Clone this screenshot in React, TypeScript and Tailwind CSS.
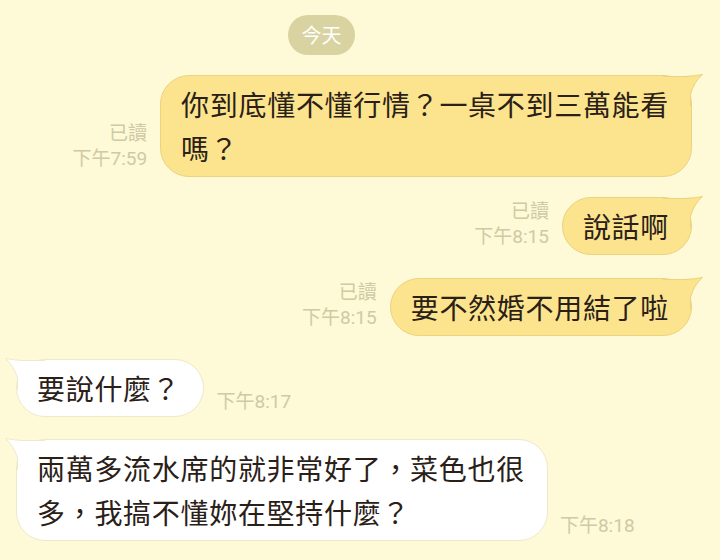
import React from "react";

function Tail({ side }: { side: "left" | "right" }) {
  const yellow = side === "right";
  const pos = yellow ? "right-[-12px]" : "left-[-12px] -scale-x-100";
  return (
    <svg className={`absolute top-[-4px] ${pos} w-[40px] h-[36px] pointer-events-none`} viewBox="0 0 40 36">
      <path d="M0 4 H22 Q32 3.5 39.5 2.5 Q31 10 28 22 V34 H0 Z" className={yellow ? "fill-[#fbe48d]" : "fill-white"} />
      <path
        d="M0 4.5 H22 Q32 4 39.5 2.5 Q31 10 27.5 22 V34"
        fill="none"
        strokeWidth="1"
        className={yellow ? "stroke-[#ecd37f]" : "stroke-[#eee9cb]"}
      />
    </svg>
  );
}

function Bubble({ side, children }: { side: "left" | "right"; children: React.ReactNode }) {
  const yellow = side === "right";
  return (
    <div
      className={`relative rounded-[29px] border ${
        yellow ? "bg-[#fbe48d] border-[#ecd37f]" : "bg-white border-[#eee9cb]"
      } pl-[20px] pr-[22px] py-[6px] text-[28px] leading-[44px] tracking-[0.7px] text-[#2a2017] font-['Noto_Sans_CJK_TC','Noto_Sans_CJK_SC',sans-serif]`}
    >
      <Tail side={side} />
      <span className="relative">{children}</span>
    </div>
  );
}

function ReadInfo({ time }: { time: string }) {
  return (
    <div className="flex flex-col items-end text-[19px] leading-[25px] text-[#cfcaa5] mb-[6px] font-[Roboto,'Noto_Sans_CJK_TC',sans-serif]">
      <span>已讀</span>
      <span>下午{time}</span>
    </div>
  );
}

function TimeOnly({ time }: { time: string }) {
  return (
    <div className="text-[19px] leading-[25px] text-[#cfcaa5] mb-[3px] font-[Roboto,'Noto_Sans_CJK_TC',sans-serif]">
      下午{time}
    </div>
  );
}

export default function App() {
  return (
    <div className="w-[720px] h-[560px] overflow-hidden bg-[#fef9d7] flex flex-col">
      <div className="ml-[288px] mt-[15px] w-[67px] h-[40px] rounded-full bg-[#d8d3a1] text-white text-[20px] flex items-center justify-center font-['Noto_Sans_CJK_TC',sans-serif]">
        今天
      </div>

      <div className="flex justify-end items-end gap-[13px] pr-[28px] mt-[20px]">
        <ReadInfo time="7:59" />
        <Bubble side="right">
          你到底懂不懂行情？一桌不到三萬能看
          <br />
          嗎？
        </Bubble>
      </div>

      <div className="flex justify-end items-end gap-[13px] pr-[28px] mt-[20px]">
        <ReadInfo time="8:15" />
        <Bubble side="right">說話啊</Bubble>
      </div>

      <div className="flex justify-end items-end gap-[13px] pr-[28px] mt-[23px]">
        <ReadInfo time="8:15" />
        <Bubble side="right">要不然婚不用結了啦</Bubble>
      </div>

      <div className="flex items-end gap-[13px] pl-[16px] mt-[23px]">
        <Bubble side="left">要說什麼？</Bubble>
        <TimeOnly time="8:17" />
      </div>

      <div className="flex items-end gap-[12px] pl-[16px] mt-[22px]">
        <Bubble side="left">
          兩萬多流水席的就非常好了，菜色也很
          <br />
          多，我搞不懂妳在堅持什麼？
        </Bubble>
        <TimeOnly time="8:18" />
      </div>
    </div>
  );
}
